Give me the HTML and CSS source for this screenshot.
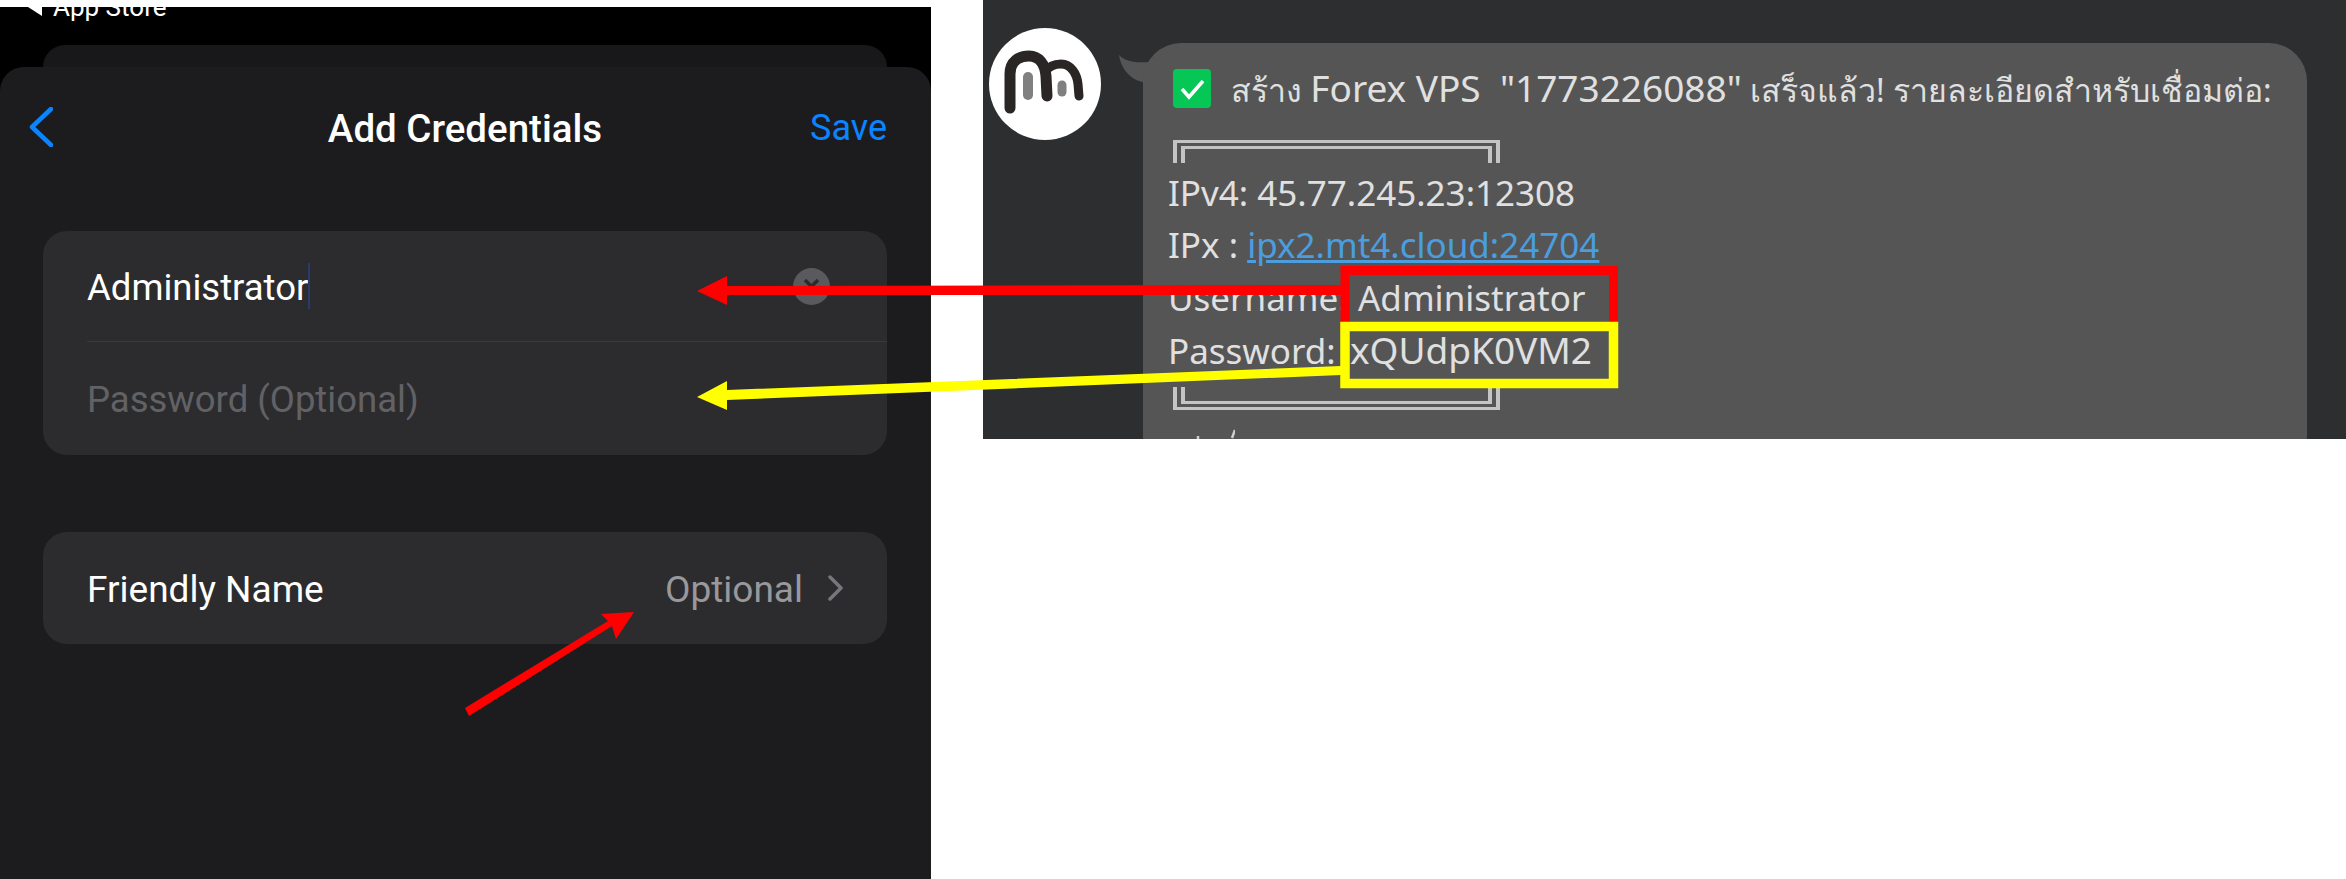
FILE: index.html
```html
<!DOCTYPE html>
<html lang="en">
<head>
  <meta charset="UTF-8">
  <title>Add Credentials</title>
  <link rel="stylesheet" href="styles.css">
</head>
<body>
  <div class="page">
    <div class="phone">
      <div class="status"><span class="status_back"></span>App Store</div>
      <div class="back_card"></div>
      <div class="sheet">
        <div class="nav">
          <svg class="nav_back" width="24" height="40" viewBox="0 0 24 40"><path d="M22 2 L3 20 L22 38" fill="none" stroke="#0a84ff" stroke-width="4.5" stroke-linecap="round" stroke-linejoin="round"/></svg>
          <div class="nav_title">Add Credentials</div>
          <div class="nav_save">Save</div>
        </div>
        <div class="group">
          <div class="row row_input">
            <span class="row_text">Administrator</span><span class="caret"></span>
            <span class="clear"><svg width="37" height="37" viewBox="0 0 37 37"><path d="M12 12 L25 25 M25 12 L12 25" stroke="#2c2c2e" stroke-width="3.5"/></svg></span>
          </div>
          <div class="row row_pass">
            <span class="row_hint">Password (Optional)</span>
          </div>
        </div>
        <div class="group group_name">
          <div class="row row_name">
            <span class="row_text row_wide">Friendly Name</span>
            <span class="row_value">Optional</span>
            <svg class="chevron" width="17" height="26" viewBox="0 0 17 26"><path d="M3 2 L14 13 L3 24" fill="none" stroke="#77777b" stroke-width="3.5" stroke-linecap="round" stroke-linejoin="round"/></svg>
          </div>
        </div>
      </div>
    </div>

    <div class="chat">
      <div class="avatar">
        <svg width="112" height="112" viewBox="0 0 112 112">
          <path d="M21 80 V46 C21 33 30 28 40 28 C50 28 56 36 57 48 L58 68" fill="none" stroke="#2a2626" stroke-width="11" stroke-linecap="round"/>
          <path d="M56 44 C60 38 66 36 72 36 C82 36 88 46 89 56 L90 68" fill="none" stroke="#2a2626" stroke-width="9" stroke-linecap="round"/>
          <path d="M39 49 V67" stroke="#808080" stroke-width="10" stroke-linecap="round"/>
          <path d="M73 57 V64" stroke="#808080" stroke-width="9" stroke-linecap="round"/>
        </svg>
      </div>
      <svg class="tail" width="34" height="28" viewBox="0 0 34 28"><path d="M0 0 C6 6 14 8 30 7 L34 27 L24 27 C12 25 2 14 0 0 Z" fill="#555"/></svg>
      <div class="bubble">
        <div class="bubble_head">
          <span class="check"><svg width="38" height="39" viewBox="0 0 38 39"><path d="M9 20 L16 28 L30 12" fill="none" stroke="#fff" stroke-width="3.5"/></svg></span>
          <span class="head_text">สร้าง <span class="head_lat">Forex VPS &nbsp;"1773226088"</span> เสร็จแล้ว! รายละเอียดสำหรับเชื่อมต่อ:</span>
        </div>
        <div class="frame frame_top"></div>
        <div class="line">IPv4: 45.77.245.23:12308</div>
        <div class="line">IPx : <a class="link">ipx2.mt4.cloud:24704</a></div>
        <div class="line"><span class="label label_user">Username:</span>Administrator</div>
        <div class="line"><span class="label label_pass">Password:</span><span class="pass_value">xQUdpK0VM2</span></div>
        <div class="frame frame_bottom"></div>
        <svg class="cut_marks" width="50" height="10" viewBox="0 0 50 10"><path d="M13 10 V7 M47 9 L50 1" stroke="#cfcfcf" stroke-width="2.5" fill="none"/></svg>
      </div>
    </div>

    <!-- red and yellow marks drawn over both shots -->
    <svg class="marks" width="2346" height="879" viewBox="0 0 2346 879">
      <rect x="1345" y="270.5" width="268.5" height="56" fill="none" stroke="#ff0000" stroke-width="9"/>
      <rect x="1345" y="326.5" width="268.5" height="57" fill="none" stroke="#ffff00" stroke-width="9.5"/>
      <polygon points="697,291 727,276 727,286 1341,285 1341,295 727,295 727,305" fill="#ff0000"/>
      <polygon points="697,397 727,381 727,390 1341,366 1341,375 727,400 727,410" fill="#ffff00"/>
      <polygon points="634,612 616,639 612,626 469,716 465,708 608,621 601,614" fill="#ff0000"/>
    </svg>
  </div>
</body>
</html>
```

FILE: styles.css
```css
*{
  margin: 0;
  padding: 0;
  box-sizing: border-box;
}

html, body{
  width: 2346px;
  height: 879px;
  background-color: #fff;
  overflow: hidden;
}

.page{
  position: relative;
  display: flex;
  align-items: flex-start;
  gap: 52px;
  width: 2346px;
  height: 879px;
}

.marks{
  position: absolute;
  top: 0;
  left: 0;
}

/* left shot */
.phone{
  flex: none;
  width: 931px;
  height: 872px;
  margin-top: 7px;
  background-color: #000;
  overflow: hidden;
  font-family: "Roboto", "Liberation Sans", sans-serif;
}

.status{
  display: flex;
  align-items: center;
  gap: 11px;
  height: 24px;
  margin-top: -12px;
  padding-left: 28px;
  color: #fff;
  font-size: 26px;
}

.status_back{
  width: 0;
  height: 0;
  border-top: 9px solid transparent;
  border-bottom: 9px solid transparent;
  border-right: 14px solid #fff;
}

.back_card{
  height: 22px;
  margin: 26px 44px 0 43px;
  background-color: #18181a;
  border-radius: 24px 24px 0 0;
}

.sheet{
  height: 812px;
  padding: 0 44px 0 43px;
  background-color: #1c1c1e;
  border-radius: 24px 24px 0 0;
}

.nav{
  display: grid;
  grid-template-columns: 1fr auto 1fr;
  align-items: center;
  height: 120px;
}

.nav_back{
  margin-left: -14px;
}

.nav_title{
  padding-top: 2px;
  color: #fff;
  font-size: 38.5px;
  font-weight: 500;
}

.nav_save{
  justify-self: end;
  padding-top: 2px;
  color: #0a84ff;
  font-size: 36px;
}

.group{
  margin-top: 44px;
  background-color: #2c2c2e;
  border-radius: 24px;
}

.group_name{
  margin-top: 77px;
}

.row{
  display: flex;
  align-items: center;
  margin-left: 44px;
  font-size: 36.5px;
  white-space: nowrap;
}

.row_input{
  height: 111px;
  border-bottom: 1px solid #3a3a3c;
  padding-right: 57px;
}

.row_pass{
  height: 113px;
}

.row_name{
  height: 112px;
  padding-right: 43px;
}

.row_text{
  padding-top: 3px;
  color: #fff;
}

.row_wide{
  font-size: 37px;
}

.row_hint{
  padding-top: 2px;
  color: #626266;
}

.caret{
  width: 2px;
  height: 46px;
  background-color: #2a3a6a;
}

.clear{
  display: flex;
  width: 37px;
  height: 37px;
  margin-left: auto;
  background-color: #5a5a5e;
  border-radius: 50%;
}

.row_value{
  margin-left: auto;
  margin-right: 24px;
  padding-top: 3px;
  color: #98989d;
  font-size: 37px;
}

/* right shot */
.chat{
  flex: none;
  display: flex;
  align-items: flex-start;
  width: 1363px;
  height: 439px;
  padding: 28px 39px 0 6px;
  overflow: hidden;
  background-color: #2d2e30;
  font-family: "Noto Sans", "Liberation Sans", sans-serif;
}

.avatar{
  flex: none;
  width: 112px;
  height: 112px;
  background-color: #fff;
  border-radius: 50%;
}

.tail{
  flex: none;
  margin: 27px -10px 0 18px;
}

.bubble{
  flex: 1;
  height: 420px;
  margin-top: 15px;
  padding: 26px 25px 0;
  background-color: #555;
  border-radius: 38px 38px 0 0;
  color: #e0e0e0;
  font-size: 35px;
}

.bubble_head{
  display: flex;
  align-items: center;
  gap: 20px;
  height: 39px;
  margin-left: 5px;
}

.check{
  flex: none;
  display: flex;
  width: 38px;
  height: 39px;
  background-color: #06c755;
  border-radius: 4px;
}

.head_text{
  white-space: nowrap;
  font-size: 32px;
}

.head_lat{
  font-size: 37px;
}

.frame{
  width: 327px;
  height: 23px;
  margin-left: 5px;
  border-style: double;
  border-color: #c4c4c4;
  border-width: 9px 12px;
}

.frame_top{
  margin-top: 32px;
  margin-bottom: 4px;
  border-bottom: none;
}

.frame_bottom{
  margin-top: 11px;
  border-top: none;
}

.line{
  height: 52.3px;
  line-height: 52px;
  white-space: nowrap;
}

.label{
  display: inline-block;
}

.label_user{
  width: 190px;
}

.label_pass{
  width: 182px;
}

.pass_value{
  font-size: 37px;
}

.link{
  color: #4a9ee0;
  text-decoration: underline;
}

.cut_marks{
  display: block;
  margin: 19px 0 0 17px;
}
```
